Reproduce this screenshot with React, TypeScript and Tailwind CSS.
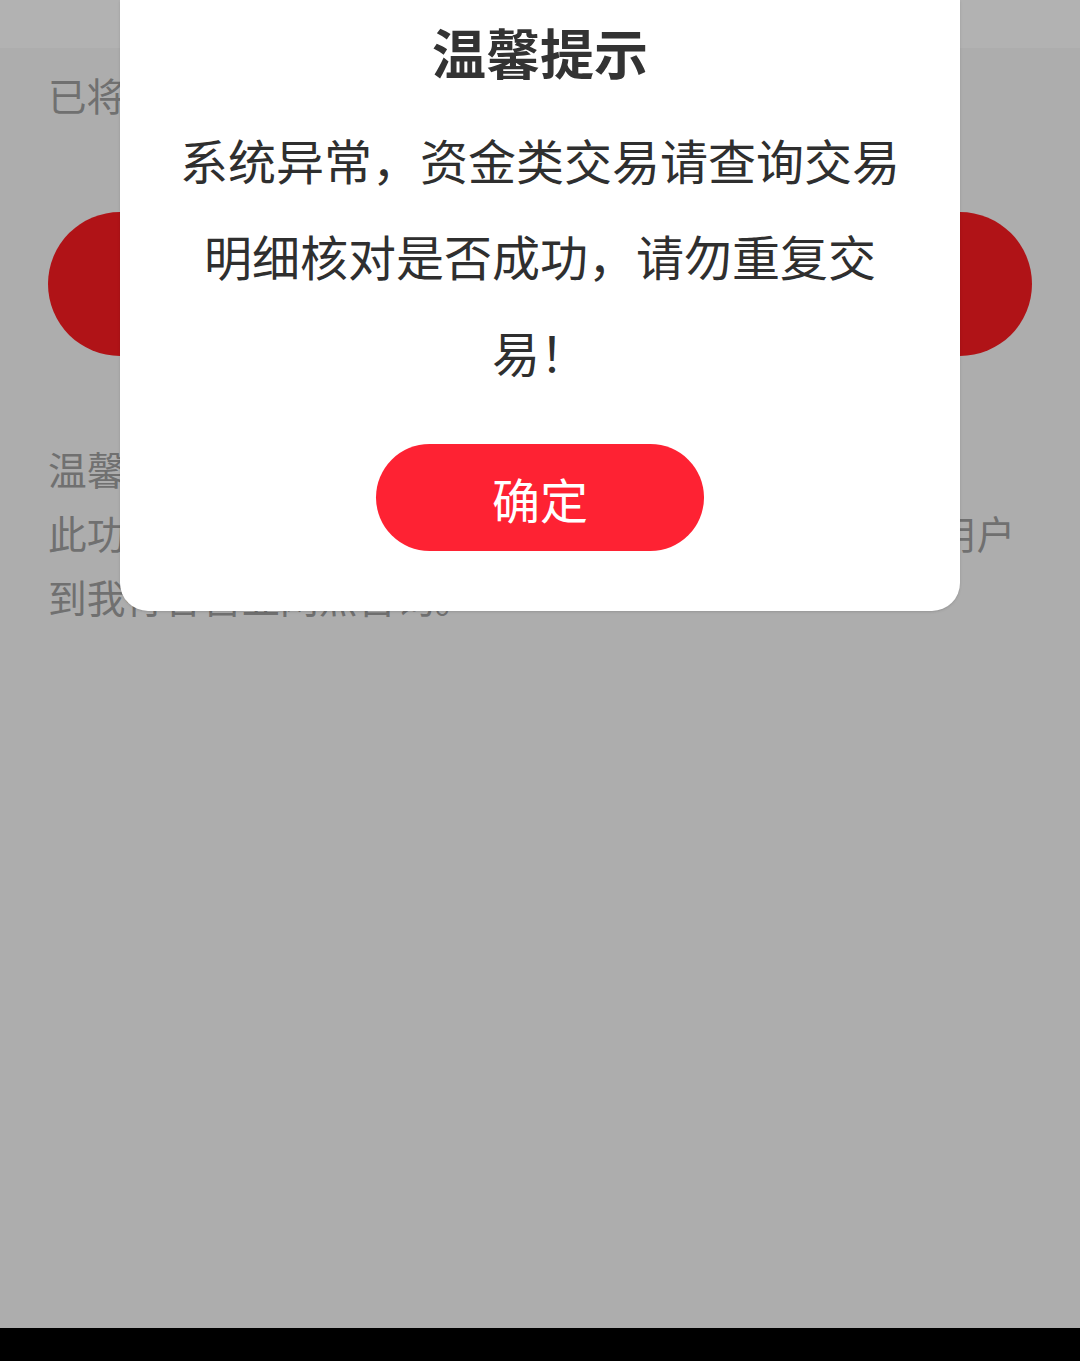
const cjk = { fontFamily: '"Noto Sans CJK SC", "Noto Sans", sans-serif' };

function Dialog() {
  return (
    <div className="absolute left-[120px] top-0 w-[840px] rounded-b-[28px] bg-white px-[59px] pt-[22px] pb-[60px] shadow-sm">
      <h2 className="text-center text-[54px] leading-[60px] font-bold text-[#333333]">温馨提示</h2>
      <p className="mt-[29px] text-center text-[48px] leading-[96px] text-[#2f2f2f]">
        系统异常，资金类交易请查询交易明细核对是否成功，请勿重复交易！
      </p>
      <div className="mt-[45px] flex justify-center">
        <button className="h-[107px] w-[328px] rounded-full bg-[#fe2233] text-[48px] leading-none text-white">
          确定
        </button>
      </div>
    </div>
  );
}

export default function App() {
  return (
    <div className="relative flex h-[1361px] w-[1080px] flex-col overflow-hidden bg-[#adadad]" style={cjk}>
      <div className="h-[48px] bg-[#b2b2b2]" />
      <main className="flex-1 px-[48px] pt-[26px]">
        <p className="text-[38.5px] leading-[40px] text-[#707070]">已将您的申请提交处理</p>
        <div className="mt-[98px] h-[144px] w-full rounded-full bg-[#b01317]" />
        <div className="mt-[80px] text-[38.7px] leading-[64px] text-[#707070]">
          <p>温馨提示：</p>
          <p>此功能仅支持本行借记卡之间资金划转，其他需求请用户</p>
          <p>到我行各营业网点咨询。</p>
        </div>
      </main>
      <div className="h-[33px] bg-black" />
      <Dialog />
    </div>
  );
}
